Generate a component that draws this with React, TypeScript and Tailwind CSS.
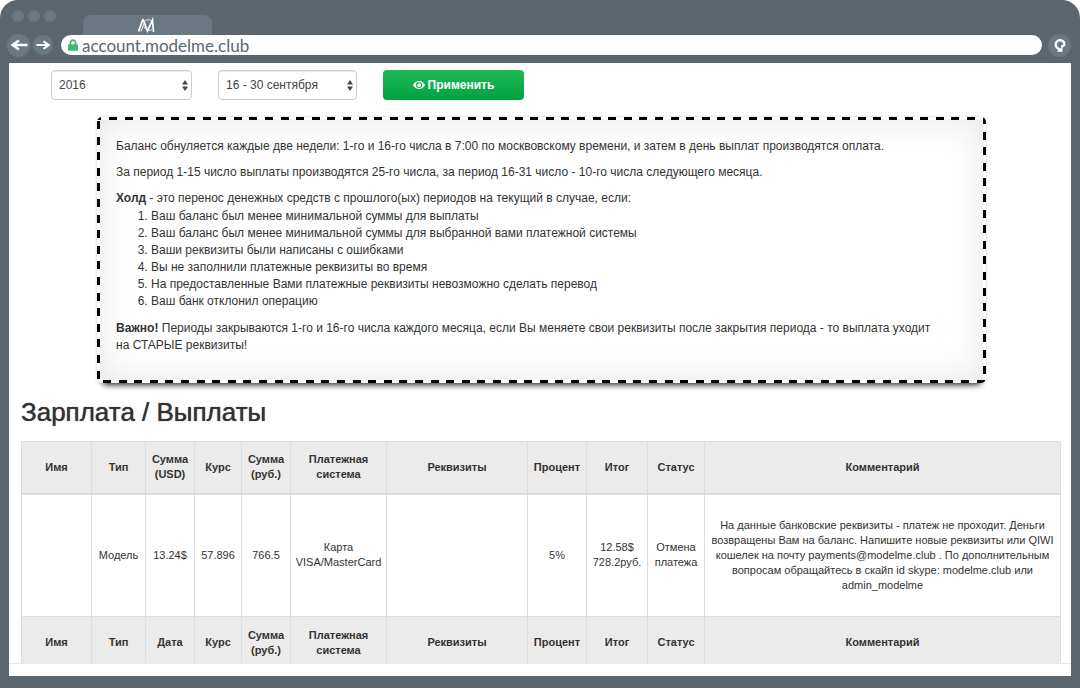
import { FaEye, FaLock } from 'react-icons/fa';

const th = 'border border-[#ddd] p-1 text-center align-middle font-bold';
const td = 'border border-[#ddd] p-1 text-center align-middle';

const columns = [
  { name: 'Имя', width: 'w-[70px]' },
  { name: 'Тип', width: 'w-[54px]' },
  { name: 'Сумма (USD)', foot: 'Дата', width: 'w-[49px]' },
  { name: 'Курс', width: 'w-[47px]' },
  { name: 'Сумма (руб.)', width: 'w-[49px]' },
  { name: 'Платежная система', width: 'w-[96px]' },
  { name: 'Реквизиты', width: 'w-[141px]' },
  { name: 'Процент', width: 'w-[59px]' },
  { name: 'Итог', width: 'w-[61px]' },
  { name: 'Статус', width: 'w-[57px]' },
  { name: 'Комментарий', width: 'w-auto' },
];

const row = [
  '',
  'Модель',
  '13.24$',
  '57.896',
  '766.5',
  'Карта VISA/MasterCard',
  '',
  '5%',
  '12.58$ 728.2руб.',
  'Отмена платежа',
  'На данные банковские реквизиты - платеж не проходит. Деньги возвращены Вам на баланс. Напишите новые реквизиты или QIWI кошелек на почту payments@modelme.club . По дополнительным вопросам обращайтесь в скайп id skype: modelme.club или admin_modelme',
];

const reasons = [
  'Ваш баланс был менее минимальной суммы для выплаты',
  'Ваш баланс был менее минимальной суммы для выбранной вами платежной системы',
  'Ваши реквизиты были написаны с ошибками',
  'Вы не заполнили платежные реквизиты во время',
  'На предоставленные Вами платежные реквизиты невозможно сделать перевод',
  'Ваш банк отклонил операцию',
];

function Arrow({ left }: { left?: boolean }) {
  return (
    <svg
      viewBox="0 0 18 12"
      className={left ? 'h-3 w-[18px]' : 'h-[10px] w-[15px] rotate-180'}
      fill="none"
      stroke="white"
      strokeWidth="2.4"
    >
      <path d="M17.5 6H3M9 1.500 2.500 6l6.500 4.500" />
    </svg>
  );
}

function Chrome() {
  return (
    <header className="h-[63px] pl-[7px] pr-[9px]">
      <div className="flex h-[35px] items-start">
        <div className="flex w-[76px] gap-1 pl-[5px] pt-[10px]">
          <span className="size-3 rounded-full bg-[#6a7882]" />
          <span className="size-3 rounded-full bg-[#6a7882]" />
          <span className="size-3 rounded-full bg-[#6a7882]" />
        </div>
        <div className="mt-[15px] flex h-5 w-[129px] items-center justify-center rounded-t-lg bg-[#6a7882] pr-[3px]">
          <svg viewBox="0 0 18 16" className="h-4 w-[18px]" fill="none" stroke="white">
            <path d="M1.500 14.500 6 2" strokeWidth="1.8" />
            <path d="M6 2l4.500 12L15.500 3l1 12" strokeWidth="1.7" />
            <path d="M4 14.500 7.500 5M6.500 2v3" strokeWidth="1" />
            <path d="M8 4c2-1.500 4-1.500 6-.5M7 9c.5 4 5 6 8 3.500" strokeWidth=".8" />
          </svg>
        </div>
      </div>
      <div className="flex h-5 items-center">
        <button aria-label="Назад" className="flex size-[23px] shrink-0 items-center justify-center rounded-full bg-[#6a7882]">
          <Arrow left />
        </button>
        <button aria-label="Вперёд" className="ml-[3px] flex size-5 shrink-0 items-center justify-center rounded-full bg-[#6a7882]">
          <Arrow />
        </button>
        <label className="ml-2 flex h-5 grow items-center rounded-full bg-white pl-[7px]">
          <FaLock className="h-3 w-[10px] text-[#3cb878]" />
          <input
            aria-label="Адрес"
            defaultValue="account.modelme.club"
            className="ml-1 h-5 grow bg-transparent font-['Lato','Liberation_Sans',sans-serif] text-[17px] leading-[19px] text-[#5c666f] outline-none"
          />
        </label>
        <button aria-label="Обновить" className="ml-[6px] flex size-[23px] shrink-0 items-center justify-center rounded-full bg-[#6a7882]">
          <svg viewBox="0 0 12 13" className="h-[13px] w-3">
            <path d="M7 7.500A4.300 4.300 0 0 0 10.300 6 4.300 4.300 0 1 0 3.500 9L6 11" fill="none" stroke="white" strokeWidth="2.300" />
            <path d="M8.500 7.500v5.300H2.800z" fill="white" />
          </svg>
        </button>
      </div>
    </header>
  );
}

function Select({ label, value, width }: { label: string; value: string; width: string }) {
  return (
    <div className={`relative ${width}`}>
      <select
        aria-label={label}
        className="block h-[30px] w-full appearance-none rounded border border-[#ccc] bg-white pl-[7px] text-[12px] text-[#444] shadow-[inset_0_1px_1px_rgba(0,0,0,0.08)]"
      >
        <option>{value}</option>
      </select>
      <svg viewBox="0 0 6 11" className="pointer-events-none absolute right-1 top-[10px] h-[11px] w-[6px] fill-[#444]">
        <path d="M3 0l3 4.500H0zM3 11 0 6.500h6z" />
      </svg>
    </div>
  );
}

function Notice() {
  return (
    <section className="ml-[76px] mr-[75px] mt-[17px] rounded-[5px] bg-[linear-gradient(90deg,#000_8px,#fff_8px_16px,#000_16px_24px,#fff_24px_31px,#000_31px_39px,#fff_39px_47px,#000_47px_55px,#fff_55px_62px,#000_62px_70px,#fff_70px),linear-gradient(90deg,#000_8px,#fff_8px_16px,#000_16px_24px,#fff_24px_31px,#000_31px_39px,#fff_39px_47px,#000_47px_55px,#fff_55px_62px,#000_62px_70px,#fff_70px),linear-gradient(#000_8px,#fff_8px_16px,#000_16px_24px,#fff_24px_31px,#000_31px_39px,#fff_39px_47px,#000_47px_55px,#fff_55px_62px,#000_62px_70px,#fff_70px),linear-gradient(#000_8px,#fff_8px_16px,#000_16px_24px,#fff_24px_31px,#000_31px_39px,#fff_39px_47px,#000_47px_55px,#fff_55px_62px,#000_62px_70px,#fff_70px)] bg-[length:78px_3px,78px_3px,3px_78px,3px_78px] bg-[position:12px_0,6px_100%,0_4px,100%_-1px] [background-repeat:repeat-x,repeat-x,repeat-y,repeat-y] p-[3px] shadow-[0_8px_6px_-6px_rgba(0,0,0,0.8),0_0_3px_rgba(0,0,0,0.2)]">
      <div className="bg-white pb-[26px] pl-4 pr-10 pt-[18px] text-[12px] leading-[17px] shadow-[inset_0_0_36px_rgba(0,0,0,0.1)]">
        <p className="mb-[9px]">
          Баланс обнуляется каждые две недели: 1-го и 16-го числа в 7:00 по москвовскому времени, и затем в день выплат
          производятся оплата.
        </p>
        <p className="mb-[9px]">
          За период 1-15 число выплаты производятся 25-го числа, за период 16-31 число - 10-го числа следующего месяца.
        </p>
        <p>
          <b>Холд</b> - это перенос денежных средств с прошлого(ых) периодов на текущий в случае, если:
        </p>
        <ol className="mb-[9px] list-decimal py-px pl-[35px]">
          {reasons.map((reason) => (
            <li key={reason}>{reason}</li>
          ))}
        </ol>
        <p>
          <b>Важно!</b> Периоды закрываются 1-го и 16-го числа каждого месяца, если Вы меняете свои реквизиты после
          закрытия периода - то выплата уходит на СТАРЫЕ реквизиты!
        </p>
      </div>
    </section>
  );
}

function Payouts() {
  return (
    <table className="w-full table-fixed border-collapse text-[11px] leading-[15px]">
      <thead className="bg-[#ebebeb]">
        <tr className="h-[52px]">
          {columns.map((c) => (
            <th key={c.name} scope="col" className={`${th} border-b-2 ${c.width}`}>
              {c.name}
            </th>
          ))}
        </tr>
      </thead>
      <tbody>
        <tr className="h-[123px]">
          {row.map((cell, i) => (
            <td key={columns[i].name} className={td}>
              {cell}
            </td>
          ))}
        </tr>
      </tbody>
      <tfoot className="bg-[#ebebeb]">
        <tr className="h-[52px]">
          {columns.map((c) => (
            <th key={c.name} className={th}>
              {c.foot ?? c.name}
            </th>
          ))}
        </tr>
      </tfoot>
    </table>
  );
}

export default function App() {
  return (
    <div className="bg-white font-['Liberation_Sans',Arial,sans-serif] text-[#333]">
      <div className="rounded-t-[18px] bg-[#5c666f] pb-3">
        <Chrome />
        <main className="mx-[9px] bg-white pb-3">
          <div className="h-[601px] overflow-hidden border-b border-[#e8e8e8] pl-3 pr-[10px] pt-[7px]">
            <form className="flex pl-[30px]" onSubmit={(e) => e.preventDefault()}>
              <Select label="Год" value="2016" width="w-[141px]" />
              <div className="ml-[26px]">
                <Select label="Период" value="16 - 30 сентября" width="w-[139px]" />
              </div>
              <button className="ml-[26px] flex h-[30px] w-[141px] items-center justify-center gap-[3px] rounded bg-linear-to-b from-[#1db954] to-[#00a143] text-[12px] font-bold text-white">
                <FaEye className="size-3" />
                Применить
              </button>
            </form>
            <Notice />
            <h1 className="mb-[14px] mt-[14px] text-[26px] font-medium leading-[30px] [text-shadow:0_0_1px_currentColor]">
              Зарплата / Выплаты
            </h1>
            <Payouts />
          </div>
        </main>
      </div>
    </div>
  );
}
